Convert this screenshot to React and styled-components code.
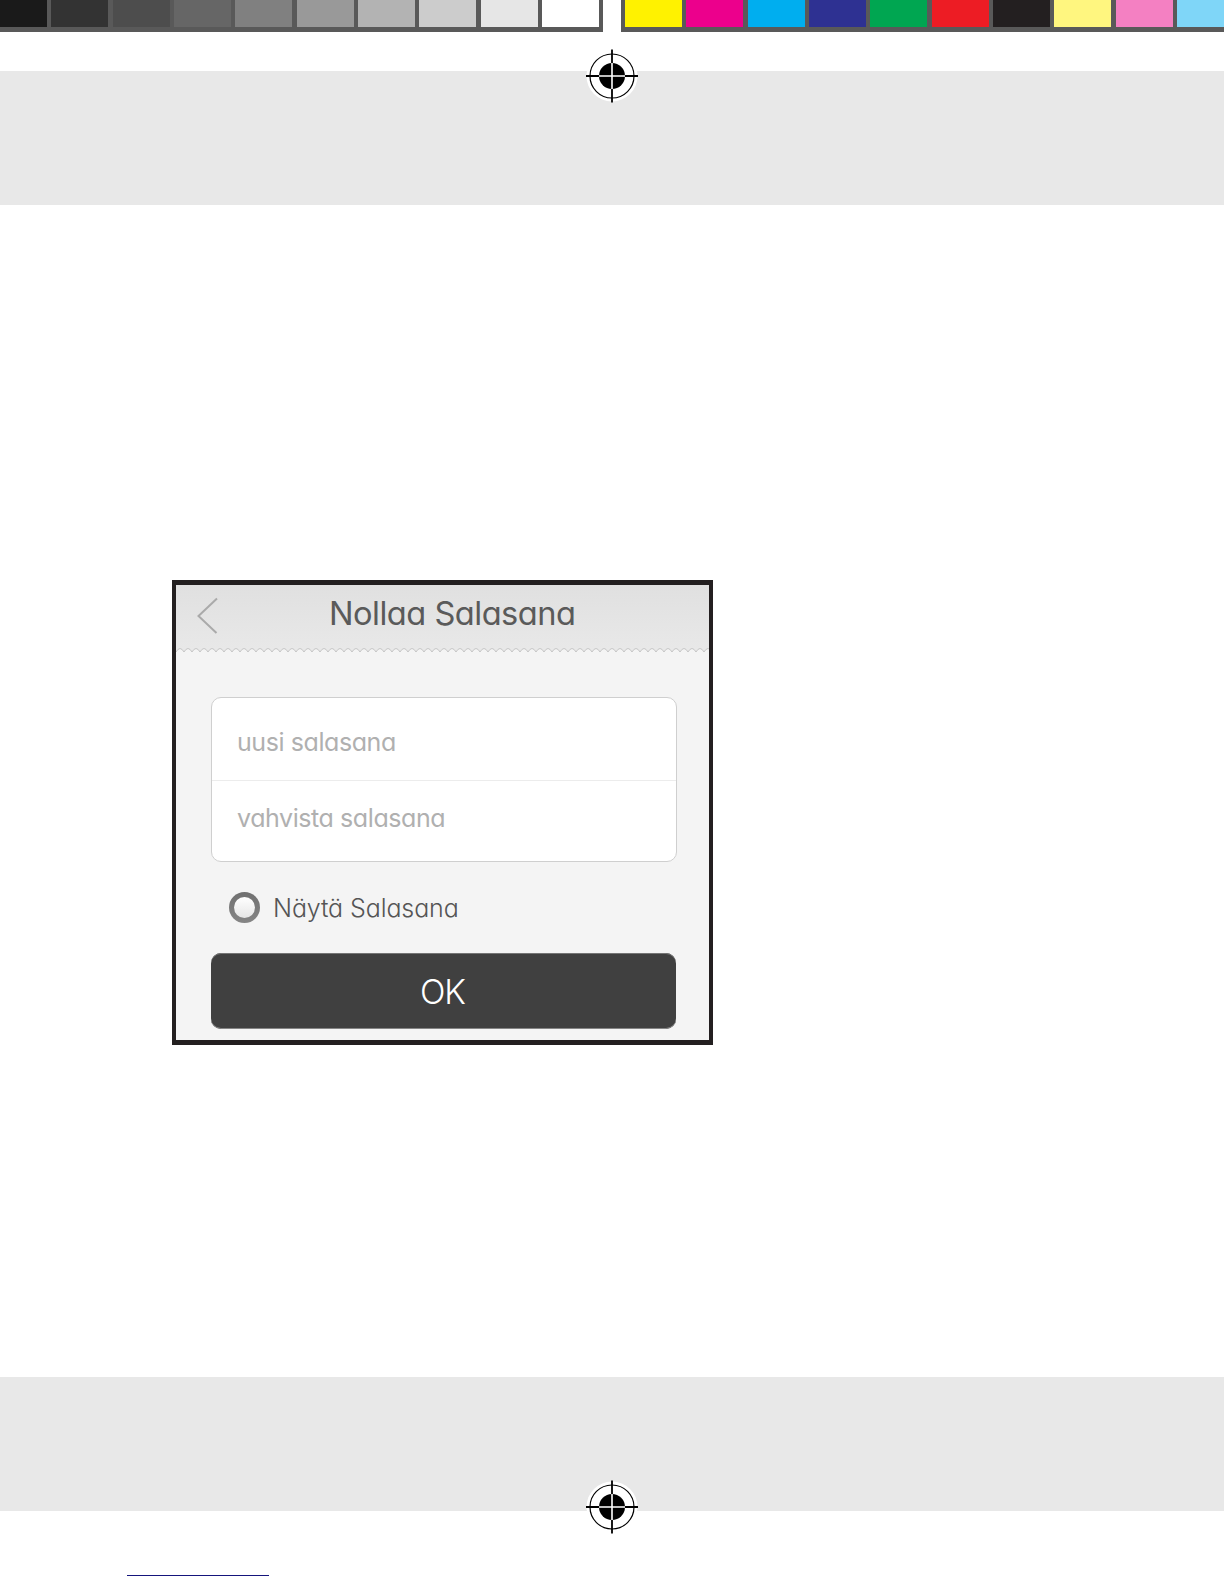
import React from "react";
import styled, { createGlobalStyle } from "styled-components";

const GlobalStyle = createGlobalStyle`
  * {
    box-sizing: border-box;
  }

  body {
    margin: 0;
    background: #fff;
    font-family: Inter, "Liberation Sans", sans-serif;
    font-feature-settings: "cv11" 1;
  }
`;

const Sheet = styled.div`
  width: 1224px;
  height: 1584px;
  display: flex;
  flex-direction: column;
  overflow: hidden;
  background: #fff;
`;

const ColorBars = styled.div`
  display: flex;
  justify-content: space-between;
  height: 32px;
  margin-bottom: 39px;
`;

const Strip = styled.div`
  width: 603px;
  display: flex;
  justify-content: ${(props) => (props.$end ? "flex-end" : "flex-start")};
  gap: 4.33px;
  padding: 0 4px 5px;
  padding-right: ${(props) => (props.$end ? "4px" : "0")};
  background: #595959;
  overflow: hidden;
`;

const Swatch = styled.div`
  flex: none;
  width: 57px;
  background: ${(props) => props.$color};
`;

const Band = styled.div`
  position: relative;
  flex: none;
  height: 134px;
  background: #e8e8e8;
`;

const Mark = styled.svg`
  position: absolute;
  left: 584px;
  top: ${(props) => props.$top}px;
  width: 56px;
  height: 56px;
`;

const Body = styled.main`
  flex: none;
  height: 1172px;
  padding: 375px 0 0 172px;
`;

const Card = styled.section`
  width: 541px;
  height: 465px;
  border: solid #231f20;
  border-width: 5px 4px;
  background: #f4f4f4;
`;

const Header = styled.header`
  display: flex;
  align-items: flex-start;
  height: 63px;
  padding-left: 21px;
  background: linear-gradient(#e0e0e0, #e8e8e8);
`;

const BackIcon = styled.svg`
  flex: none;
  width: 22px;
  height: 38px;
  margin-top: 12px;
`;

const Title = styled.h1`
  margin: 8px 0 0 110px;
  font-size: 32.6px;
  font-weight: 400;
  line-height: 40px;
  letter-spacing: -0.5px;
  color: #5a5a5a;
  white-space: nowrap;
`;

const Edge = styled.svg`
  display: block;
  width: 533px;
  height: 6px;
`;

const Form = styled.div`
  width: 466px;
  margin: 43px 0 0 35px;
`;

const Fields = styled.div`
  height: 165px;
  border: 1px solid #cfcfcf;
  border-radius: 10px;
  background: #fff;
`;

const Field = styled.div`
  height: ${(props) => props.$height}px;
  padding: ${(props) => props.$pad};
  font-size: 25px;
  font-weight: 400;
  line-height: 30px;
  letter-spacing: -0.42px;
  color: #b0b0b0;

  & + & {
    border-top: 1px solid #ececec;
  }
`;

const Option = styled.label`
  display: flex;
  align-items: center;
  height: 91px;
  padding-left: 18px;
`;

const Radio = styled.span`
  width: 31px;
  height: 31px;
  padding: 5px;
  border-radius: 50%;
  background: linear-gradient(#707070, #858585);

  &::before {
    content: "";
    display: block;
    height: 21px;
    border-radius: 50%;
    background: linear-gradient(#fff, #e6e6e6);
  }
`;

const OptionText = styled.span`
  margin-left: 13px;
  font-size: 25px;
  font-weight: 350;
  letter-spacing: -0.1px;
  color: #555;
  white-space: nowrap;
`;

const Button = styled.button`
  display: block;
  width: 465px;
  height: 76px;
  padding: 2px 2px 0 0;
  border: 0;
  border-radius: 10px;
  background: #404040;
  box-shadow: inset 0 1px #757575, inset 0 -1px #858585;
  color: #fff;
  font: inherit;
  font-feature-settings: inherit;
  font-size: 33.5px;
  font-weight: 350;
  letter-spacing: -1px;
`;

const Rule = styled.div`
  flex: none;
  width: 142px;
  height: 1px;
  margin: 64px 0 0 127px;
  background: #15157c;
`;

const grays = [
  "#1a1a1a",
  "#333333",
  "#4d4d4d",
  "#666666",
  "#808080",
  "#999999",
  "#b3b3b3",
  "#cccccc",
  "#e6e6e6",
  "#ffffff",
];

const inks = [
  "#fff200",
  "#ec008c",
  "#00aeef",
  "#2e3192",
  "#00a651",
  "#ed1c24",
  "#231f20",
  "#fff67f",
  "#f480c2",
  "#7fd6f8",
];

const zigzag = Array.from(
  { length: 67 },
  (_, i) => `${i ? "L" : "M"}${i * 8} 4 Q${i * 8 + 4} -3 ${i * 8 + 8} 4`
).join(" ");

const RegistrationMark = ({ top }) => (
  <Mark $top={top} viewBox="-28 -28 56 56" fill="none">
    <circle r="25.5" fill="#fff" />
    <circle r="22" stroke="#000" strokeWidth="1.2" />
    <path d="M-26 0H26M0 -26.5V26.5" stroke="#000" strokeWidth="1.8" />
    <circle r="13" fill="#000" />
    <path d="M-13 0H13M0 -13V13" stroke="#fff" strokeWidth="1.6" />
  </Mark>
);

const App = () => {
  return (
    <Sheet>
      <GlobalStyle />
      <ColorBars>
        <Strip $end>
          {grays.map((color) => (
            <Swatch key={color} $color={color} />
          ))}
        </Strip>
        <Strip>
          {inks.map((color) => (
            <Swatch key={color} $color={color} />
          ))}
        </Strip>
      </ColorBars>
      <Band>
        <RegistrationMark top={-23.5} />
      </Band>
      <Body>
        <Card>
          <Header>
            <BackIcon viewBox="0 0 22 38" fill="none">
              <path d="M20 1.5L1.5 19L19.5 36" stroke="#aaa" strokeWidth="2" />
            </BackIcon>
            <Title>Nollaa Salasana</Title>
          </Header>
          <Edge viewBox="0 0 533 6">
            <path d={`${zigzag} V0 H0 Z`} fill="#e8e8e8" />
            <path d={zigzag} fill="none" stroke="#c6c6c6" />
          </Edge>
          <Form>
            <Fields>
              <Field $height={82} $pad="29px 0 0 25px">
                uusi salasana
              </Field>
              <Field $height={81} $pad="22px 0 0 25px">
                vahvista salasana
              </Field>
            </Fields>
            <Option>
              <Radio />
              <OptionText>Näytä Salasana</OptionText>
            </Option>
            <Button>OK</Button>
          </Form>
        </Card>
      </Body>
      <Band>
        <RegistrationMark top={102} />
      </Band>
      <Rule />
    </Sheet>
  );
};

export default App;
